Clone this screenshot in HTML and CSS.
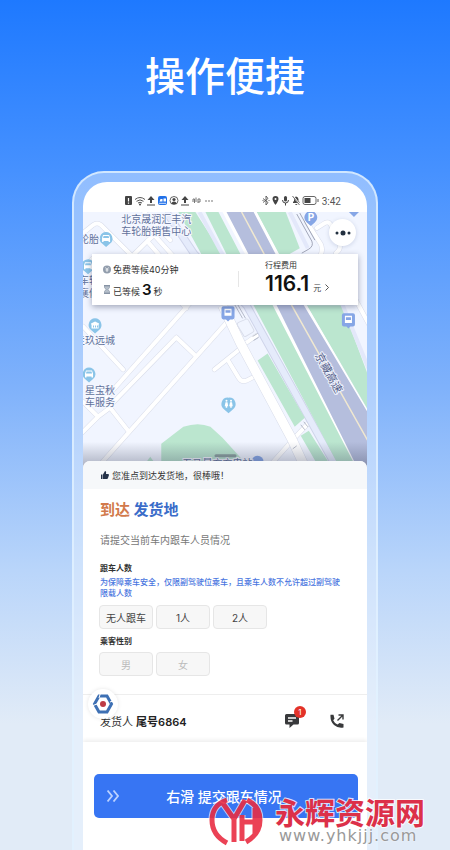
FILE: index.html
```html
<!DOCTYPE html>
<html lang="zh-CN">
<head>
    <meta charset="UTF-8">
    <meta name="viewport" content="width=device-width, initial-scale=1.0">
    <title>操作便捷</title>
    <link rel="stylesheet" href="styles.css">
</head>
<body>
    <h1 class="slogan">操作便捷</h1>

    <div class="phone">
        <div class="screen">
            <!-- Status bar -->
            <div class="status-bar">
                <svg class="status-icons" width="90" height="12" viewBox="0 0 90 12">
                    <rect x="1" y="1" width="7" height="9" rx="1" fill="#444"/>
                    <path d="M4.500 3v3.500M4.500 7.500v1.200" stroke="#fff" stroke-width="1.200"/>
                    <path d="M11 4.500q5-4 10 0M12.500 6.300q3.500-2.800 7 0M14 8q2-1.500 4 0" fill="none" stroke="#555"/>
                    <circle cx="16" cy="9.500" r="1" fill="#444"/>
                    <path d="M27 1l3.500 4H28v3h-2V5h-2.500zM23 9.500h8v1h-8z" fill="#444"/>
                    <rect x="34" y="1" width="9" height="9" rx="2" fill="#2271e8"/>
                    <path d="M35.500 6.500l1-2.500h2v2.500zM39.500 3.500h2.500v3h-2.500z" fill="#fff"/>
                    <path d="M35 8.300h7" stroke="#fff" stroke-width=".8"/>
                    <circle cx="50" cy="5.500" r="4" fill="none" stroke="#555" stroke-width=".9"/>
                    <circle cx="50" cy="4.500" r="1.600" fill="#444"/>
                    <path d="M47.500 9q0-2.500 2.500-2.500T52.500 9z" fill="#444"/>
                    <path d="M61 1l3.500 4H62v3h-2V5h-2.500zM57 9.500h8v1h-8z" fill="#444"/>
                    <path d="M69 7V4h1.500v4M72 7V2.500M74 8V4h2v3h-2" fill="none" stroke="#777"/>
                    <g fill="#444"><circle cx="82" cy="6" r=".7"/><circle cx="85" cy="6" r=".7"/><circle cx="88" cy="6" r=".7"/></g>
                </svg>
                <div class="status-right">
                    <svg width="60" height="12" viewBox="0 0 60 12">
                        <path d="M1 3.500l5 4L4 10V1l2 2.500-5 4M.5 5.500h1M6.500 5.500h1" fill="none" stroke="#555" stroke-width=".9"/>
                        <path d="M13.500 1a3 3 0 0 0-3 3c0 2 3 6 3 6s3-4 3-6a3 3 0 0 0-3-3z" fill="#444"/>
                        <circle cx="13.500" cy="4" r="1" fill="#fff"/>
                        <rect x="22" y="1" width="3" height="5.500" rx="1.500" fill="#444"/>
                        <path d="M20.500 5q0 3 3 3t3-3M23.500 8v2.500" fill="none" stroke="#444"/>
                        <path d="M31 8V7l1-1V4q0-2.500 2-2.500T36.500 4v2l1 1v1zM33 9h2.500q-1.200 2-2.500 0z" fill="#444"/>
                        <path d="M31 1l7 9" stroke="#fff" stroke-width="1.600"/>
                        <path d="M30.500 1l7 9" stroke="#444" stroke-width=".8"/>
                        <rect x="41" y="1.500" width="13" height="8" rx="2" fill="none" stroke="#555" stroke-width=".9"/>
                        <rect x="42.500" y="3" width="6" height="5" fill="#444"/>
                        <path d="M56 4v3" stroke="#555"/>
                    </svg>
                    <span>3:42</span>
                </div>
            </div>

            <!-- Map -->
            <div class="map">
                <svg class="map-canvas" viewBox="83 212 283 256" preserveAspectRatio="xMidYMin slice">
                    <defs>
                        <linearGradient id="fade" x1="0" y1="0" x2="0" y2="1">
                            <stop offset="0" stop-color="#333a55" stop-opacity="0"/>
                            <stop offset="1" stop-color="#333a55" stop-opacity=".4"/>
                        </linearGradient>
                        <g id="streets">
                            <path d="M83 233l10-8q4-3 8 0l24 24 14 14M83 268l10-10"/>
                            <path d="M134 254l13-13 12 14M147 241l7-6 18 20M170 240l-26-28"/>
                            <path d="M192 300l-92 104M176 337l-67 69M176 337l19 18M186 308l-5-5"/>
                            <path d="M228 320L98 466"/>
                            <path d="M83 326l40 43M83 401l15 15-17 17M98 416l12-9 18 23"/>
                            <path d="M240 348l-26 21M227 359l11 18q3 5 8 3l8-4"/>
                            <path d="M242 345l14-10M268 466l25-28 15-16"/>
                            <path d="M306 222l14 22q4 9-5 15M316 228l8-5q4-2 6 2l8 18q3 6-3 10"/>
                            <path d="M355 300l14 26"/>
                        </g>
                    </defs>
                    <rect x="83" y="212" width="283" height="260" fill="#f1f5ff"/>
                    <use href="#streets" fill="none" stroke="#d9ddea" stroke-width="5" stroke-linecap="round" stroke-linejoin="round"/>
                    <use href="#streets" fill="none" stroke="#fff" stroke-width="4" stroke-linecap="round" stroke-linejoin="round"/>
                    <path d="M222 305L240 343 291 438 304 466" fill="none" stroke="#d9ddea" stroke-width="10"/>
                    <path d="M222 305L240 343 291 438 304 466" fill="none" stroke="#fff" stroke-width="9"/>
                    <path d="M238 322l7-3q2-1 3 1l5 9q1 2-1 3l-7 4q-2 0-2-1l-6-10q-1-2 1-3z" fill="#f1f5ff" stroke="#d9ddea"/>
                    <path d="M166 212l28 42 52 51 92 166" fill="none" stroke="#cfd4ea" stroke-width="8"/>
                    <path d="M166 212l28 42 52 51 92 166" fill="none" stroke="#e5ebfb" stroke-width="6"/>
                    <g fill="#bbe6cf">
                        <path d="M178 212h17l28 44h-21zM205 212h13l22 42h-14zM226 256h14l33 49 88 164h-21L253 305z"/>
                        <path d="M256 212h29l14 36-14 8h-6z"/>
                        <path d="M306 305h35l27 72v34z"/>
                        <path d="M257 360l10-7 37 64-10 9zM300 435l8-5 24 38h-13z"/>
                        <path d="M161 470v-27l22-17q15-5 27 0l12 11 30 33zM144 464l6-8 6 8z"/>
                    </g>
                    <path d="M222 212h34l23 43 27 50 62 107v60h-10l-86-167z" fill="#fff"/>
                    <path d="M226 212h27l22 42 28 51 65 109v58h-9l-83-167-28-51z" fill="#b5bedd"/>
                    <path d="M241 212l50 93 77 137" fill="none" stroke="#f0e8d0" stroke-width="1.500"/>
                    <path d="M199 212l24 44M289 212l18 36M341 303l27 66" fill="none" stroke="#e3e8fa" stroke-width="4"/>
                    <path d="M296 214l15 27q2 5-3 8l-7 4M299 213l15 27" fill="none" stroke="#8e93a8" stroke-width=".8"/>
                    <path d="M234 304l8 14M237 304l8 14M252 336l5-3M253 340l5-3M300 424l4 5M303 421l4 5M292 448l4-3" stroke="#a8adbd" stroke-width=".8"/>

                    <!-- Place markers -->
                    <g fill="#8ac4e8">
                        <path d="M106 232a6.500 6.500 0 0 1 4 11.500l-4 3.500-4-3.500a6.500 6.500 0 0 1 4-11.500z"/>
                        <path d="M88 259a6.500 6.500 0 0 1 4 11.500l-4 3.500-4-3.500a6.500 6.500 0 0 1 4-11.500z"/>
                        <path d="M95 318a6.500 6.500 0 0 1 4 11.500l-4 3.500-4-3.500a6.500 6.500 0 0 1 4-11.500z"/>
                        <path d="M89 367a6.500 6.500 0 0 1 4 11.500l-4 3.500-4-3.500a6.500 6.500 0 0 1 4-11.500z"/>
                        <path d="M228 397a6.500 6.500 0 0 1 4 12l-4 3.500-4-3.500a6.500 6.500 0 0 1 4-12z"/>
                    </g>
                    <g fill="#fff">
                        <path d="M103 235h6l1 3v4h-1.500v-1h-5v1H102v-4z"/>
                        <path d="M85 262h6l1 3v4h-1.500v-1h-5v1H84v-4zM86 370h6l1 3v4h-1.500v-1h-5v1H85v-4z"/>
                        <path d="M95 321l4 2v1h-.5v4h-7v-4H91v-1z"/>
                        <circle cx="226" cy="400" r="1"/><circle cx="230.500" cy="400" r="1"/>
                        <path d="M225 401.500h2l.7 4h-1v1.500h-1.500v-1.500h-1zM229.500 401.500h2l.7 4h-1v1.500h-1.500v-1.500h-1z"/>
                    </g>
                    <path d="M103.500 236h5l.5 2h-6zM86.500 371h5l.5 2h-6zM85.500 263h5l.5 2h-6z" fill="#8ac4e8"/>
                    <path d="M93 325h1v2h-1zM95 325h1v2h-1zM97 325h1v2h-1z" fill="#8ac4e8"/>
                    <g fill="#86a6e6">
                        <path d="M223 306h9q2 0 2 2v9q0 2-2 2h-2.500l-2 2-2-2H223q-2 0-2-2v-9q0-2 2-2z"/>
                        <path d="M343 313h9q2 0 2 2v9q0 2-2 2h-2.500l-2 2-2-2H343q-2 0-2-2v-9q0-2 2-2z"/>
                        <path d="M310 211a6.500 6.500 0 0 1 4 11.500l-4 3.500-4-3.500a6.500 6.500 0 0 1 4-11.500zM348 212h10l-5 5z"/>
                        <circle cx="257" cy="461" r="6"/>
                    </g>
                    <path d="M224 308.500h7v7h-7zM344 315.500h7v7h-7z" fill="#fff"/>
                    <path d="M225 310h5v2.500h-5zM345 317h5v2.500h-5z" fill="#86a6e6"/>
                    <text class="parking" x="307" y="221">P</text>

                    <g class="place">
                        <text x="121" y="223">北京晟润汇丰汽</text>
                        <text x="121" y="235">车轮胎销售中心</text>
                        <text x="79" y="243">轮胎</text>
                        <text x="79" y="284">车轮</text>
                        <text x="79" y="297">襄修</text>
                        <text x="75" y="344">圭玖远城</text>
                        <text x="85" y="393">星宝秋</text>
                        <text x="85" y="405">车服务</text>
                        <text x="182" y="466">五马景充充电站</text>
                    </g>
                    <text class="road-name" transform="translate(314 355) rotate(61)">京藏高速</text>
                    <rect x="214" y="453.500" width="22" height="3" rx="1.500" fill="#8b9f9e"/>
                    <rect x="83" y="441" width="284" height="27" fill="url(#fade)"/>
                </svg>

                <button class="more" aria-label="更多">
                    <svg width="16" height="6" viewBox="0 0 16 6"><g fill="#22303f"><circle cx="2" cy="3" r="1.500"/><circle cx="8" cy="3" r="2.500"/><circle cx="14" cy="3" r="1.500"/></g></svg>
                </button>

                <div class="fare-card">
                    <div class="waiting">
                        <div class="wait-row">
                            <svg width="8" height="9" viewBox="0 0 8 9"><circle cx="4" cy="4.500" r="4" fill="#929dac"/><path d="M2.500 2.500L4 4.500l1.500-2M4 4.500V7M2.500 5h3" fill="none" stroke="#fff" stroke-width=".8"/></svg>
                            <span>免费等候40分钟</span>
                        </div>
                        <div class="wait-row">
                            <svg width="8" height="9" viewBox="0 0 8 9"><path d="M1 .5h6M1 8.500h6" stroke="#8794a5"/><path d="M1.500 1h5v1.500L5 4.500l1.500 2V8h-5V6.500l1.500-2-1.500-2z" fill="#b4bec9" stroke="#8794a5" stroke-width=".7"/></svg>
                            <span>已等候<b>3</b>秒</span>
                        </div>
                    </div>
                    <a class="fare" href="#">
                        <span class="fare-label">行程费用</span>
                        <span class="fare-value"><b>116.1</b>元
                            <svg width="4" height="7" viewBox="0 0 4 7"><path d="M.5.5l3 3-3 3" fill="none" stroke="#444" stroke-width=".9"/></svg>
                        </span>
                    </a>
                </div>
            </div>

            <!-- Order sheet -->
            <div class="sheet">
                <div class="notice">
                    <svg width="8" height="8" viewBox="0 0 8 8"><path d="M0 3.500h1.500V8H0zM2 3.500L4 0q1.500 0 1 3h2q1 0 1 1L7 7q-.3 1-1 1H2z" fill="#25334a"/></svg>
                    <span>您准点到达发货地，很棒哦！</span>
                </div>
                <div class="form">
                    <h2><span class="arrive">到达</span> 发货地</h2>
                    <p class="hint">请提交当前车内跟车人员情况</p>
                    <h3>跟车人数</h3>
                    <p class="rule">为保障乘车安全，仅限副驾驶位乘车，且乘车人数不允许超过副驾驶限载人数</p>
                    <div class="options">
                        <button>无人跟车</button>
                        <button>1人</button>
                        <button>2人</button>
                    </div>
                    <h3>乘客性别</h3>
                    <div class="options">
                        <button disabled>男</button>
                        <button disabled>女</button>
                    </div>
                </div>
                <div class="contact">
                    <div class="assistant">
                        <svg width="22" height="22" viewBox="0 0 22 22">
                            <path d="M7 3h8l4.500 8L15 19H7l-4.500-8z" fill="none" stroke="#3e70b4" stroke-width="3"/>
                            <path d="M8.500 0L7 5M18 9l4-1.500M1 12.500l4-1.500" stroke="#fff"/>
                            <circle cx="11" cy="11" r="3" fill="#bd3b45"/>
                        </svg>
                    </div>
                    <p>发货人 <b>尾号6864</b></p>
                    <a class="message" href="#" aria-label="消息">
                        <svg width="14" height="14" viewBox="0 0 14 14"><path d="M1.500 0h11Q14 0 14 1.500V9q0 1.500-1.500 1.500H8.500L4.500 14v-3.500h-3Q0 10.500 0 9V1.500Q0 0 1.500 0z" fill="#38393b"/><path d="M3 4h8M3 7h4.500" stroke="#fff" stroke-width="1.300"/></svg>
                        <span class="badge">1</span>
                    </a>
                    <a class="call" href="#" aria-label="电话">
                        <svg width="14" height="14" viewBox="0 0 14 14"><path d="M.5.8H3.500l1 4-1.300 1.500Q4.500 9.300 7.500 10.600l2-1.600 4 1v3.500Q8 14.500 4 11T.5.8z" fill="#38393b"/><path d="M7.500 6.500l5-5M8.500 1H13v4.500" fill="none" stroke="#38393b" stroke-width="1.400"/></svg>
                    </a>
                </div>
                <div class="footer">
                    <button class="slide">
                        <svg width="12" height="12" viewBox="0 0 12 12"><path d="M.5.5L5 6 .5 11.500M6.500.5L11 6l-4.500 5.500" fill="none" stroke="#bcd2ff" stroke-width="1.800"/></svg>
                        <span>右滑 提交跟车情况</span>
                    </button>
                </div>
            </div>
        </div>
    </div>

    <!-- Site mark -->
    <div class="site-mark">
        <svg width="56" height="50" viewBox="0 0 56 50">
            <g fill="none" stroke-linejoin="round">
                <path d="M19 4Q4 9 4 24t15 23M14 6l12 17L37 4M26 22v24M34 19v26M34 26h14M47 12v26M39 4q13 6 13 20T38 46" stroke="#fff" stroke-width="7" stroke-opacity=".7"/>
                <path d="M19 4Q4 9 4 24t15 23M14 6l12 17L37 4M26 22v24M34 19v26M34 26h14M47 12v26M39 4q13 6 13 20T38 46" stroke="#e92e43" stroke-width="5"/>
            </g>
        </svg>
        <div class="site-text">
            <strong>永辉资源网</strong>
            <span>www.yhkjjj.com</span>
        </div>
    </div>
</body>
</html>
```
FILE: styles.css
```css
* {
    box-sizing: border-box;
}

body {
    font-family: Inter, 'Noto Sans CJK SC', sans-serif;
    margin: 0;
    min-height: 100vh;
    display: flex;
    flex-direction: column;
    position: relative;
    overflow-x: hidden;
    color: #333;
    background: linear-gradient(#1e79ff 0%, #4691ff 20%, #7eb1fb 45%, #b9d5fa 67%, #e1ebf7 85%, #e1ebf7 100%);
}

h1, h2, h3, p {
    margin: 0;
}

button {
    font-family: inherit;
    padding: 0;
    border: none;
    cursor: pointer;
}

svg {
    display: block;
    flex-shrink: 0;
}

.slogan {
    padding: 47px 0 64px;
    font-size: 40px;
    line-height: 60px;
    font-weight: 500;
    text-align: center;
    color: #fff;
}

.phone {
    flex: 1;
    display: flex;
    margin: 0 16%;
    padding: 9px 9px 0;
    border: 2px solid rgba(225, 242, 255, 0.8);
    border-bottom: none;
    border-radius: 32px 32px 0 0;
    background: rgba(235, 243, 255, 0.45);
}

.screen {
    flex: 1;
    min-width: 0;
    display: flex;
    flex-direction: column;
    border-radius: 24px 24px 0 0;
    overflow: hidden;
    background: #fff;
}

.status-bar {
    height: 30px;
    padding: 8px 26px 0 41px;
    display: flex;
    justify-content: space-between;
    align-items: center;
}

.status-right {
    display: flex;
    align-items: center;
    font-family: Roboto, sans-serif;
    font-size: 10px;
    color: #555;
}

.map {
    position: relative;
    height: 256px;
}

.map-canvas {
    width: 100%;
    height: 100%;
}

.place {
    font-size: 10px;
    fill: #61719b;
    stroke: #f6f8ff;
    stroke-width: 2px;
    paint-order: stroke;
}

.parking {
    font-size: 10px;
    font-weight: 700;
    fill: #fff;
}

.road-name {
    font-size: 11px;
    fill: #55618a;
    stroke: #eef1fc;
    stroke-width: 2px;
    paint-order: stroke;
}

.more {
    position: absolute;
    top: 7px;
    right: 11px;
    width: 27px;
    height: 27px;
    display: flex;
    justify-content: center;
    align-items: center;
    border-radius: 50%;
    background: #fff;
    box-shadow: 0 1px 4px rgba(60, 80, 130, 0.2);
}

.fare-card {
    position: absolute;
    top: 42px;
    left: 9px;
    right: 9px;
    height: 51px;
    display: flex;
    align-items: center;
    background: #fff;
    box-shadow: 0 2px 6px rgba(40, 50, 80, 0.4);
}

.waiting {
    flex: 1;
    padding-left: 11px;
}

.wait-row {
    height: 20px;
    display: flex;
    align-items: center;
    gap: 2px;
    font-size: 9px;
}

.wait-row b {
    margin: 0 2px;
    font-size: 15px;
    line-height: 20px;
    font-weight: 600;
    color: #111;
}

.fare {
    width: 120px;
    padding-left: 27px;
    position: relative;
    text-decoration: none;
    color: #444;
    font-size: 8px;
}

.fare::before {
    content: "";
    position: absolute;
    left: 0;
    top: 12px;
    width: 1px;
    height: 16px;
    background: #e6e6e6;
}

.fare-label {
    display: block;
    line-height: 12px;
    color: #333;
}

.fare-value {
    display: flex;
    align-items: baseline;
    gap: 4px;
    line-height: 26px;
}

.fare-value b {
    font-size: 21px;
    font-weight: 600;
    color: #111;
}

.sheet {
    flex: 1;
    position: relative;
    margin-top: -7px;
    border-radius: 7px 7px 0 0;
    background: #fff;
}

.notice {
    height: 28px;
    padding-left: 18px;
    display: flex;
    align-items: center;
    gap: 3px;
    border-radius: 7px 7px 0 0;
    background: #f6f8fa;
    font-size: 9px;
}

.form {
    height: 205px;
    padding: 11px 22px 0 17px;
}

.form h2 {
    font-size: 15px;
    line-height: 20px;
    font-weight: 700;
    color: #3a6cc9;
}

.form h2 .arrive {
    color: #d27a4c;
}

.hint {
    margin: 12px 0 14px;
    font-size: 10px;
    line-height: 16px;
    color: #777;
}

.form h3 {
    font-size: 8px;
    line-height: 13px;
    font-weight: 700;
}

.rule {
    margin: 2px 0 6px;
    font-size: 8px;
    line-height: 11px;
    font-weight: 500;
    color: #4a76e0;
}

.options {
    display: flex;
    gap: 3px;
    margin: 0 0 6px -1px;
}

.options button {
    width: 54px;
    height: 24px;
    border: 1px solid #e6e6e6;
    border-radius: 4px;
    background: #f7f7f7;
    font-size: 10px;
    color: #444;
}

.options button:disabled {
    color: #bbb;
}

.options + h3 {
    margin-bottom: 4px;
}

.contact {
    position: relative;
    height: 48px;
    padding: 4px 23px 0 17px;
    display: flex;
    align-items: center;
    gap: 31px;
    border-top: 1px solid #eee;
    font-size: 11px;
}

.contact p {
    flex: 1;
}

.contact b {
    font-weight: 600;
    color: #222;
}

.assistant {
    position: absolute;
    top: -6px;
    left: 5px;
    width: 30px;
    height: 30px;
    display: flex;
    justify-content: center;
    align-items: center;
    border-radius: 50%;
    background: #fff;
    box-shadow: 0 0 4px rgba(0, 0, 0, 0.1);
}

.message {
    position: relative;
}

.badge {
    position: absolute;
    top: -8px;
    right: -7px;
    width: 12px;
    height: 12px;
    border-radius: 50%;
    background: #e33228;
    font-size: 8px;
    line-height: 12px;
    text-align: center;
    color: #fff;
}

.footer {
    padding: 32px 9px 33px 11px;
    box-shadow: 0 -2px 4px rgba(0, 0, 0, 0.07);
}

.slide {
    width: 100%;
    height: 44px;
    padding: 0 13px;
    display: flex;
    align-items: center;
    border-radius: 5px;
    background: #3775f3;
    font-size: 14px;
    font-weight: 500;
    color: #fff;
}

.slide span {
    flex: 1;
    padding-right: 16px;
    text-align: center;
}

.site-mark {
    position: absolute;
    right: 25px;
    bottom: 5px;
    display: flex;
    align-items: center;
    gap: 11px;
}

.site-mark > svg {
    opacity: 0.9;
}

.site-text {
    display: flex;
    flex-direction: column;
}

.site-text strong {
    font-size: 30px;
    line-height: 30px;
    font-weight: 700;
    color: #dc3049;
    -webkit-text-stroke: 2px rgba(255, 255, 255, 0.8);
    paint-order: stroke;
}

.site-text span {
    padding-left: 4px;
    font-family: 'DejaVu Sans', sans-serif;
    font-size: 16px;
    line-height: 16px;
    letter-spacing: 1px;
    color: #999;
    text-shadow: 0 0 2px #fff;
}
```
